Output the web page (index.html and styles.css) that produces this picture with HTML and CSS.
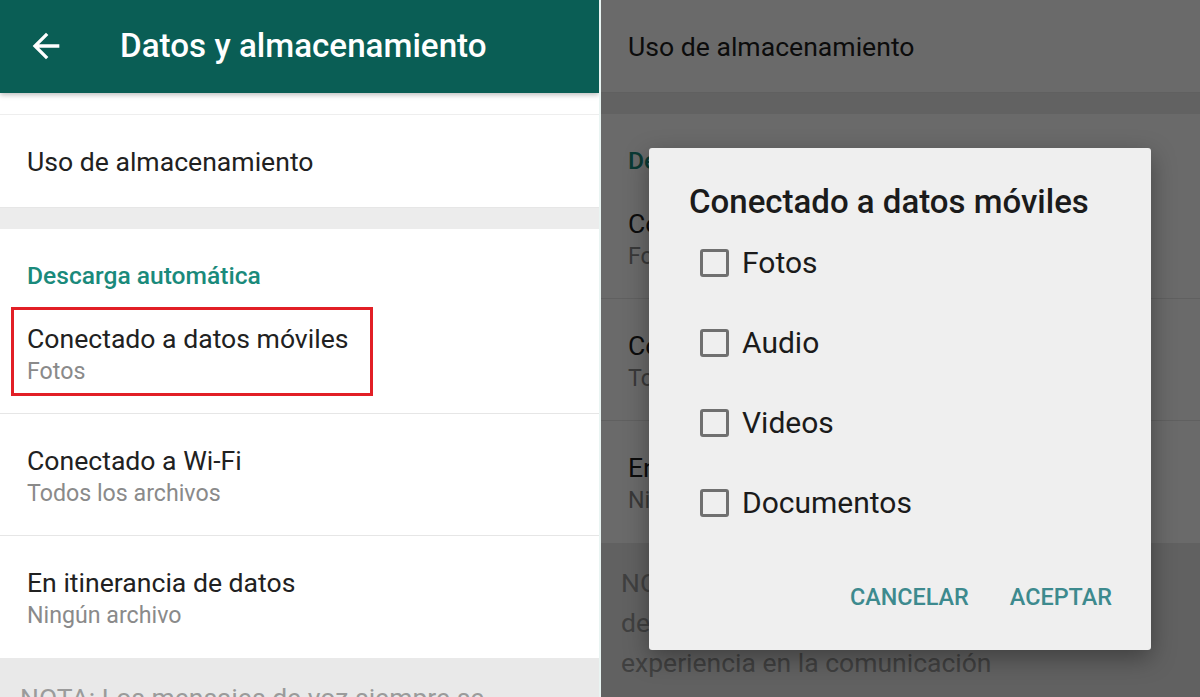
FILE: index.html
```html
<!DOCTYPE html>
<html lang="es">
<head>
<meta charset="utf-8">
<title>Datos y almacenamiento</title>
<link rel="stylesheet" href="styles.css">
</head>
<body>
<div class="page">
  <section class="panel panel-left">
    <header class="appbar">
      <svg class="back" viewBox="0 0 24 24" width="40" height="40"><path d="M20 11H7.83l5.59-5.59L12 4l-8 8 8 8 1.41-1.41L7.83 13H20v-2z" fill="#ffffff"/></svg>
      <h1 class="appbar-title">Datos y almacenamiento</h1>
    </header>
    <div class="appbar-gap"></div>
    <div class="list">
      <div class="item item-single"><div class="item-title">Uso de almacenamiento</div></div>
      <div class="band"></div>
      <div class="section">
        <div class="section-title">Descarga automática</div>
        <div class="item item-double">
          <div class="item-title">Conectado a datos móviles</div>
          <div class="item-sub">Fotos</div>
          <div class="highlight"></div>
        </div>
        <div class="item item-double">
          <div class="item-title">Conectado a Wi-Fi</div>
          <div class="item-sub">Todos los archivos</div>
        </div>
        <div class="item item-double item-last">
          <div class="item-title">En itinerancia de datos</div>
          <div class="item-sub">Ningún archivo</div>
        </div>
      </div>
      <div class="note">NOTA: Los mensajes de voz siempre se<br>descargan automáticamente para una mejor<br>experiencia en la comunicación</div>
    </div>
  </section>
  <div class="split"></div>
  <section class="panel panel-right">
    <div class="list">
      <div class="item item-single"><div class="item-title">Uso de almacenamiento</div></div>
      <div class="band"></div>
      <div class="section">
        <div class="section-title">Descarga automática</div>
        <div class="item item-double">
          <div class="item-title">Conectado a datos móviles</div>
          <div class="item-sub">Fotos</div>
        </div>
        <div class="item item-double">
          <div class="item-title">Conectado a Wi-Fi</div>
          <div class="item-sub">Todos los archivos</div>
        </div>
        <div class="item item-double item-last">
          <div class="item-title">En itinerancia de datos</div>
          <div class="item-sub">Ningún archivo</div>
        </div>
      </div>
      <div class="note">NOTA: Los mensajes de voz siempre se<br>descargan automáticamente para una mejor<br>experiencia en la comunicación</div>
    </div>
    <div class="scrim"></div>
    <div class="dialog">
      <h2 class="dialog-title">Conectado a datos móviles</h2>
      <div class="options">
        <label class="option"><span class="box"></span><span class="option-label">Fotos</span></label>
        <label class="option"><span class="box"></span><span class="option-label">Audio</span></label>
        <label class="option"><span class="box"></span><span class="option-label">Videos</span></label>
        <label class="option"><span class="box"></span><span class="option-label">Documentos</span></label>
      </div>
      <div class="actions">
        <span class="btn">CANCELAR</span>
        <span class="btn">ACEPTAR</span>
      </div>
    </div>
  </section>
</div>
</body>
</html>
```
FILE: styles.css
```css
* { box-sizing: border-box; }
html, body { margin: 0; padding: 0; }
body {
  width: 1200px;
  height: 697px;
  overflow: hidden;
  font-family: Roboto, "Noto Sans", "Liberation Sans", sans-serif;
  background: #ffffff;
}
.page {
  display: flex;
  width: 1200px;
  height: 697px;
}
.panel {
  width: 599px;
  height: 697px;
  overflow: hidden;
  background: #ffffff;
  position: relative;
}
.split {
  width: 2px;
  background: #e9f4f2;
}
.appbar {
  height: 93px;
  background: #0a5e55;
  display: flex;
  align-items: center;
  padding-left: 26px;
  box-shadow: 0 2px 5px rgba(0,0,0,0.25);
  position: relative;
  z-index: 1;
}
.back { display: block; flex: none; margin-top: -2px; }
.appbar-title {
  margin: -2px 0 0 54px;
  color: #ffffff;
  font-size: 33.2px;
  font-weight: 500;
  white-space: nowrap;
}
.appbar-gap { height: 21px; }
.panel-left .list { border-top: 1px solid #eeeeee; }
.item {
  padding-left: 27px;
  position: relative;
  border-bottom: 1px solid #e6e6e6;
}
.item-single { height: 93px; padding-top: 30px; }
.item-double { height: 122px; padding-top: 30px; }
.item-last { border-bottom: none; height: 122px; }
.item-title {
  font-size: 26.6px;
  line-height: 33px;
  color: #212121;
  white-space: nowrap;
}
.item-sub {
  font-size: 23.2px;
  line-height: 33px;
  color: #8a8a8a;
  white-space: nowrap;
}
.band {
  height: 21px;
  background: #ececec;
}
.section-title {
  height: 63px;
  padding: 30px 0 0 27px;
  font-size: 24.6px;
  line-height: 33px;
  font-weight: 500;
  color: #1a8a7b;
  white-space: nowrap;
}
.highlight {
  position: absolute;
  left: 11px;
  top: 15px;
  width: 362px;
  height: 89px;
  border: 3px solid #e21f26;
}
.note {
  background: #e9e9e9;
  padding: 20px 0 0 20px;
  font-size: 26.5px;
  line-height: 40px;
  color: #9b9b9b;
  height: 200px;
  white-space: nowrap;
}
.panel-right .item-title { color: #1d1d1d; }
.scrim {
  position: absolute;
  inset: 0;
  background: rgba(0,0,0,0.585);
}
.dialog {
  position: absolute;
  left: 48px;
  top: 148px;
  width: 502px;
  height: 502px;
  background: #efefef;
  border-radius: 3px;
  box-shadow: 0 8px 24px rgba(0,0,0,0.35);
  padding: 35px 39px 0 40px;
}
.dialog-title {
  margin: 0;
  font-size: 33px;
  line-height: 38px;
  font-weight: 500;
  color: #1b1b1b;
  white-space: nowrap;
}
.options {
  margin-top: 2px;
  padding-left: 11px;
}
.option {
  display: flex;
  align-items: center;
  height: 80px;
}
.box {
  width: 29px;
  height: 28px;
  border: 3px solid #707070;
  border-radius: 3px;
  flex: none;
}
.option-label {
  margin-left: 13px;
  font-size: 30px;
  line-height: 36px;
  color: #1b1b1b;
}
.actions {
  display: flex;
  justify-content: flex-end;
  gap: 41px;
  margin-top: 39px;
}
.btn {
  font-size: 23.4px;
  font-weight: 500;
  color: #3d8a8e;
  line-height: 30px;
}
```
